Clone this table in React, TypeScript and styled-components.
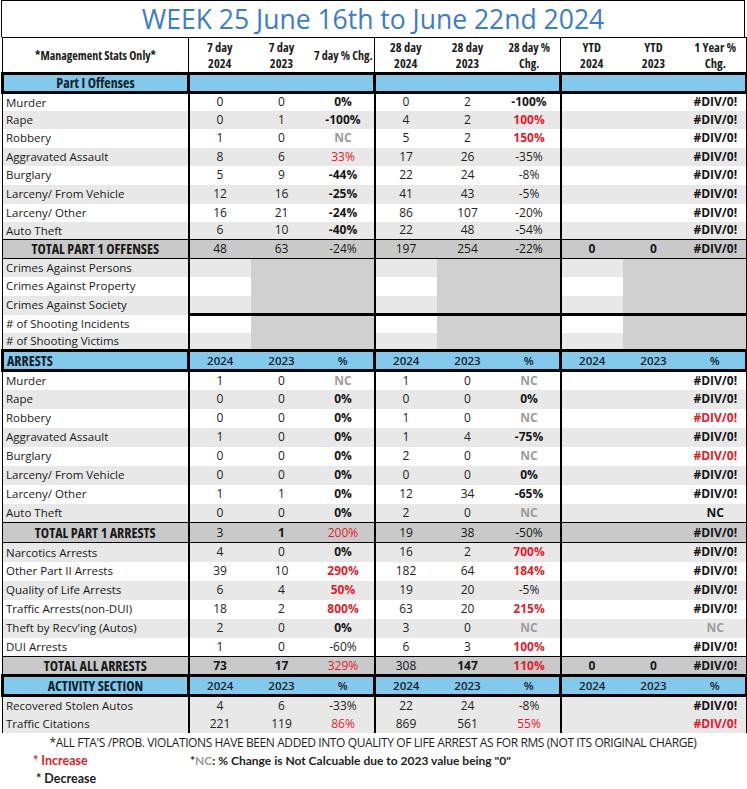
import React from 'react';
import styled, { createGlobalStyle } from 'styled-components';

const GlobalStyle = createGlobalStyle`
  html, body {
    margin: 0;
    padding: 0;
    background: #ffffff;
  }
  body {
    font-family: "Open Sans", "Roboto", sans-serif;
  }
`;

const RED = '#e31b2b';
const GRAY_TEXT = '#9b9b9b';
const ALT = '#e8e8e8';
const MID = '#d0d0d0';
const TOTAL = '#c9c9c9';
const BLUE = '#83c9eb';

const Sheet = styled.div`
  width: 744px;
  margin-left: 1px;
`;

const Title = styled.div`
  height: 37px;
  box-sizing: border-box;
  border: 1px solid #000;
  border-bottom: none;
  display: flex;
  align-items: center;
  justify-content: center;
  font-size: 26.5px;
  color: #3b7dc8;
`;

const Grid = styled.table`
  width: 744px;
  border-collapse: collapse;
  table-layout: fixed;
  font-size: 12px;
  color: #222;
`;

const Row = styled.tr<{ $h: number }>`
  height: ${(p) => p.$h}px;
`;

type Edge = { t?: number; r?: number; b?: number; l?: number };

const edgeCss = (e: Edge) => `
  border-top: ${e.t ? `${e.t}px solid #000` : 'none'};
  border-right: ${e.r ? `${e.r}px solid #000` : 'none'};
  border-bottom: ${e.b ? `${e.b}px solid #000` : 'none'};
  border-left: ${e.l ? `${e.l}px solid #000` : 'none'};
`;

const Cell = styled.td<{
  $bg?: string;
  $weight?: number;
  $color?: string;
  $edge: Edge;
}>`
  padding: 0;
  text-align: center;
  vertical-align: middle;
  line-height: 1;
  white-space: nowrap;
  overflow: hidden;
  background: ${(p) => p.$bg || '#fff'};
  font-weight: ${(p) => p.$weight || 400};
  color: ${(p) => p.$color || 'inherit'};
  ${(p) => edgeCss(p.$edge)}
`;

const LabelCell = styled(Cell)<{ $total?: boolean }>`
  padding-left: ${(p) => (p.$total ? '0' : '3px')};
  text-align: ${(p) => (p.$total ? 'center' : 'left')};
  font-size: ${(p) => (p.$total ? '14px' : '11.5px')};
  font-stretch: ${(p) => (p.$total ? 'condensed' : 'normal')};
  font-weight: ${(p) => (p.$total ? 700 : 400)};
  color: #181818;
`;

const HeadCell = styled.th<{ $size: number; $edge: Edge }>`
  padding: 1px 0 0;
  font-size: ${(p) => p.$size}px;
  font-stretch: condensed;
  font-weight: 700;
  line-height: 16px;
  color: #1c1c1c;
  text-align: center;
  vertical-align: middle;
  white-space: nowrap;
  border-top: 1px solid #000;
  border-right: ${(p) => (p.$edge.r ? `${p.$edge.r}px solid #000` : 'none')};
  border-left: ${(p) => (p.$edge.l ? `${p.$edge.l}px solid #000` : 'none')};
`;

const SectionCell = styled.td<{ $align: 'left' | 'center'; $strong?: boolean; $edge: Edge }>`
  padding: 0;
  padding-left: ${(p) => (p.$align === 'left' ? '3px' : '0')};
  background: ${BLUE};
  text-align: ${(p) => p.$align};
  vertical-align: middle;
  line-height: 1;
  font-size: ${(p) => (p.$strong ? '14px' : '11.5px')};
  font-stretch: ${(p) => (p.$strong ? 'condensed' : 'normal')};
  font-weight: ${(p) => (p.$strong ? 700 : 600)};
  color: #151d28;
  border-top: 3px solid #000;
  border-bottom: 3px solid #000;
  border-left: ${(p) => (p.$edge.l ? `${p.$edge.l}px solid #000` : 'none')};
  border-right: ${(p) => (p.$edge.r ? `${p.$edge.r}px solid #000` : 'none')};
`;

const Notes = styled.div`
  padding-top: 1px;
`;

const NoteLine = styled.div`
  height: 18px;
  line-height: 18px;
  text-align: center;
  font-size: 12px;
  letter-spacing: -0.4px;
  color: #1e1e1e;
  white-space: nowrap;
`;

const KeyRow = styled.div`
  display: flex;
  align-items: center;
  height: 18px;
  font-family: "Lato", sans-serif;
  font-size: 12.5px;
  font-weight: 700;
`;

const Key = styled.span<{ $color: string; $indent: number }>`
  width: ${(p) => 189 - p.$indent}px;
  padding-left: ${(p) => p.$indent}px;
  color: ${(p) => p.$color};
`;

const Explain = styled.span`
  font-size: 12px;
  color: #1e1e1e;
`;

const NcMark = styled.span`
  color: ${GRAY_TEXT};
`;

type RowKind = 'data' | 'total';

type DataRow = {
  label: string;
  vals: string[];
  kind?: RowKind;
  alt?: boolean;
  h?: number;
};

// value markers: "!" bold, "^" red, "~" gray
const parse = (raw: string) => {
  let s = raw;
  let bold = false;
  let color: string | undefined;
  while (s.length && '!^~'.includes(s[0])) {
    if (s[0] === '!') bold = true;
    if (s[0] === '^') color = RED;
    if (s[0] === '~') color = GRAY_TEXT;
    s = s.slice(1);
  }
  return { text: s, bold, color };
};

const offenses: DataRow[] = [
  { label: 'Murder', vals: ['0', '0', '!0%', '0', '2', '!-100%', '', '', '!#DIV/0!'] },
  { label: 'Rape', alt: true, vals: ['0', '1', '!-100%', '4', '2', '!^100%', '', '', '!#DIV/0!'] },
  { label: 'Robbery', h: 19, vals: ['1', '0', '!~NC', '5', '2', '!^150%', '', '', '!#DIV/0!'] },
  { label: 'Aggravated Assault', alt: true, vals: ['8', '6', '^33%', '17', '26', '-35%', '', '', '!#DIV/0!'] },
  { label: 'Burglary', h: 19, vals: ['5', '9', '!-44%', '22', '24', '-8%', '', '', '!#DIV/0!'] },
  { label: 'Larceny/ From Vehicle', alt: true, h: 19, vals: ['12', '16', '!-25%', '41', '43', '-5%', '', '', '!#DIV/0!'] },
  { label: 'Larceny/ Other', vals: ['16', '21', '!-24%', '86', '107', '-20%', '', '', '!#DIV/0!'] },
  { label: 'Auto Theft', alt: true, vals: ['6', '10', '!-40%', '22', '48', '-54%', '', '', '!#DIV/0!'] },
  { label: 'TOTAL PART 1 OFFENSES', kind: 'total', h: 19, vals: ['48', '63', '-24%', '197', '254', '-22%', '!0', '!0', '!#DIV/0!'] },
];

const crimes = [
  'Crimes Against Persons',
  'Crimes Against Property',
  'Crimes Against Society',
  '# of Shooting Incidents',
  '# of Shooting Victims',
];

const arrests: DataRow[] = [
  { label: 'Murder', vals: ['1', '0', '!~NC', '1', '0', '!~NC', '', '', '!#DIV/0!'] },
  { label: 'Rape', alt: true, vals: ['0', '0', '!0%', '0', '0', '!0%', '', '', '!#DIV/0!'] },
  { label: 'Robbery', vals: ['0', '0', '!0%', '1', '0', '!~NC', '', '', '!^#DIV/0!'] },
  { label: 'Aggravated Assault', alt: true, vals: ['1', '0', '!0%', '1', '4', '!-75%', '', '', '!#DIV/0!'] },
  { label: 'Burglary', vals: ['0', '0', '!0%', '2', '0', '!~NC', '', '', '!^#DIV/0!'] },
  { label: 'Larceny/ From Vehicle', alt: true, vals: ['0', '0', '!0%', '0', '0', '!0%', '', '', '!#DIV/0!'] },
  { label: 'Larceny/ Other', vals: ['1', '1', '!0%', '12', '34', '!-65%', '', '', '!#DIV/0!'] },
  { label: 'Auto Theft', alt: true, vals: ['0', '0', '!0%', '2', '0', '!~NC', '', '', '!NC'] },
  { label: 'TOTAL PART 1 ARRESTS', kind: 'total', h: 20, vals: ['3', '!1', '^200%', '19', '38', '-50%', '', '', '!#DIV/0!'] },
  { label: 'Narcotics Arrests', alt: true, vals: ['4', '0', '!0%', '16', '2', '!^700%', '', '', '!#DIV/0!'] },
  { label: 'Other Part II Arrests', vals: ['39', '10', '!^290%', '182', '64', '!^184%', '', '', '!#DIV/0!'] },
  { label: 'Quality of Life Arrests', alt: true, vals: ['6', '4', '!^50%', '19', '20', '-5%', '', '', '!#DIV/0!'] },
  { label: 'Traffic Arrests(non-DUI)', vals: ['18', '2', '!^800%', '63', '20', '!^215%', '', '', '!#DIV/0!'] },
  { label: "Theft by Recv'ing (Autos)", alt: true, vals: ['2', '0', '!0%', '3', '0', '!~NC', '', '', '!~NC'] },
  { label: 'DUI Arrests', vals: ['1', '0', '-60%', '6', '3', '!^100%', '', '', '!#DIV/0!'] },
  { label: 'TOTAL ALL ARRESTS', kind: 'total', vals: ['!73', '!17', '^329%', '308', '!147', '!^110%', '!0', '!0', '!#DIV/0!'] },
];

const activity: DataRow[] = [
  { label: 'Recovered Stolen Autos', alt: true, h: 19, vals: ['4', '6', '-33%', '22', '24', '-8%', '', '', '!#DIV/0!'] },
  { label: 'Traffic Citations', alt: true, h: 18, vals: ['221', '119', '^86%', '869', '561', '^55%', '', '', '!^#DIV/0!'] },
];

const dataEdge = (i: number, extra: Edge = {}): Edge => ({
  l: i === 0 ? 1 : undefined,
  r: i === 0 || i === 3 || i === 6 ? 2 : i === 9 ? 1 : undefined,
  ...extra,
});

const sectionEdge = (i: number): Edge => ({
  l: i === 0 || i === 1 || i === 4 || i === 7 ? 3 : undefined,
  r: i === 0 || i === 3 || i === 6 || i === 9 ? 3 : undefined,
});

const headers: { lines: string[]; size: number }[] = [
  { lines: ['*Management Stats Only*'], size: 12 },
  { lines: ['7 day', '2024'], size: 12.5 },
  { lines: ['7 day', '2023'], size: 12.5 },
  { lines: ['7 day % Chg.'], size: 12 },
  { lines: ['28 day', '2024'], size: 12.5 },
  { lines: ['28 day', '2023'], size: 12.5 },
  { lines: ['28 day %', 'Chg.'], size: 12 },
  { lines: ['YTD', '2024'], size: 12.5 },
  { lines: ['YTD', '2023'], size: 12.5 },
  { lines: ['1 Year %', 'Chg.'], size: 12.5 },
];

function StatRow({ row, h }: { row: DataRow; h: number }) {
  const total = row.kind === 'total';
  const bg = total ? TOTAL : row.alt ? ALT : '#fff';
  const border: Edge = total ? { t: 1, b: 1 } : {};
  return (
    <Row $h={row.h || h}>
      <LabelCell $bg={bg} $total={total} $edge={dataEdge(0, border)}>
        {row.label}
      </LabelCell>
      {row.vals.map((raw, i) => {
        const v = parse(raw);
        const weight = v.bold ? 700 : total ? 500 : 400;
        return (
          <Cell key={i} $bg={bg} $weight={weight} $color={v.color || (v.bold || total ? '#161616' : undefined)} $edge={dataEdge(i + 1, border)}>
            {v.text}
          </Cell>
        );
      })}
    </Row>
  );
}

function SectionRow({ label, align, cols, h }: { label: string; align: 'left' | 'center'; cols: boolean; h: number }) {
  const heads = ['2024', '2023', '%'];
  return (
    <Row $h={h}>
      <SectionCell $align={align} $strong $edge={sectionEdge(0)}>{label}</SectionCell>
      {Array.from({ length: 9 }, (_, i) => (
        <SectionCell key={i} $align="center" $edge={sectionEdge(i + 1)}>
          {cols ? heads[i % 3] : ''}
        </SectionCell>
      ))}
    </Row>
  );
}

function CrimeRow({ label, index }: { label: string; index: number }) {
  const alt = index % 2 === 0;
  const light = alt ? ALT : '#fff';
  const split = index === 2 ? { b: 3 } : {};
  const heights = [18, 19, 19, 18, 18];
  return (
    <Row $h={heights[index]}>
      <LabelCell $bg={light} $edge={dataEdge(0)}>{label}</LabelCell>
      {Array.from({ length: 9 }, (_, i) => (
        <Cell key={i} $bg={i % 3 === 0 ? light : MID} $edge={dataEdge(i + 1, split)} />
      ))}
    </Row>
  );
}

export default function App() {
  return (
    <>
      <GlobalStyle />
      <Sheet>
        <Title>WEEK 25 June 16th to June 22nd 2024</Title>
        <Grid>
          <colgroup>
            <col style={{ width: 186 }} />
            {Array.from({ length: 9 }, (_, i) => (
              <col key={i} style={{ width: 62 }} />
            ))}
          </colgroup>
          <tbody>
            <Row $h={36}>
              {headers.map((hd, i) => (
                <HeadCell key={i} $size={hd.size} $edge={{ l: i === 0 ? 1 : undefined, r: i === 0 || i === 3 || i === 6 || i === 9 ? 1 : undefined }}>
                  {hd.lines.map((ln, j) => (
                    <React.Fragment key={j}>
                      {j > 0 && <br />}
                      {ln}
                    </React.Fragment>
                  ))}
                </HeadCell>
              ))}
            </Row>
            <SectionRow label="Part I Offenses" align="center" cols={false} h={19} />
            {offenses.map((r, i) => (
              <StatRow key={i} row={r} h={18} />
            ))}
            {crimes.map((c, i) => (
              <CrimeRow key={i} label={c} index={i} />
            ))}
            <SectionRow label="ARRESTS" align="left" cols h={20} />
            {arrests.map((r, i) => (
              <StatRow key={i} row={r} h={19} />
            ))}
            <SectionRow label="ACTIVITY SECTION" align="center" cols h={20} />
            {activity.map((r, i) => (
              <StatRow key={i} row={r} h={18} />
            ))}
          </tbody>
        </Grid>
        <Notes>
          <NoteLine>
            *ALL FTA'S /PROB. VIOLATIONS HAVE BEEN ADDED INTO QUALITY OF LIFE ARREST AS FOR RMS (NOT ITS ORIGINAL CHARGE)
          </NoteLine>
          <KeyRow>
            <Key $color={RED} $indent={32}>* Increase</Key>
            <Explain>
              *<NcMark>NC</NcMark>: % Change is Not Calcuable due to 2023 value being "0"
            </Explain>
          </KeyRow>
          <KeyRow>
            <Key $color="#1e1e1e" $indent={35}>* Decrease</Key>
          </KeyRow>
        </Notes>
      </Sheet>
    </>
  );
}
